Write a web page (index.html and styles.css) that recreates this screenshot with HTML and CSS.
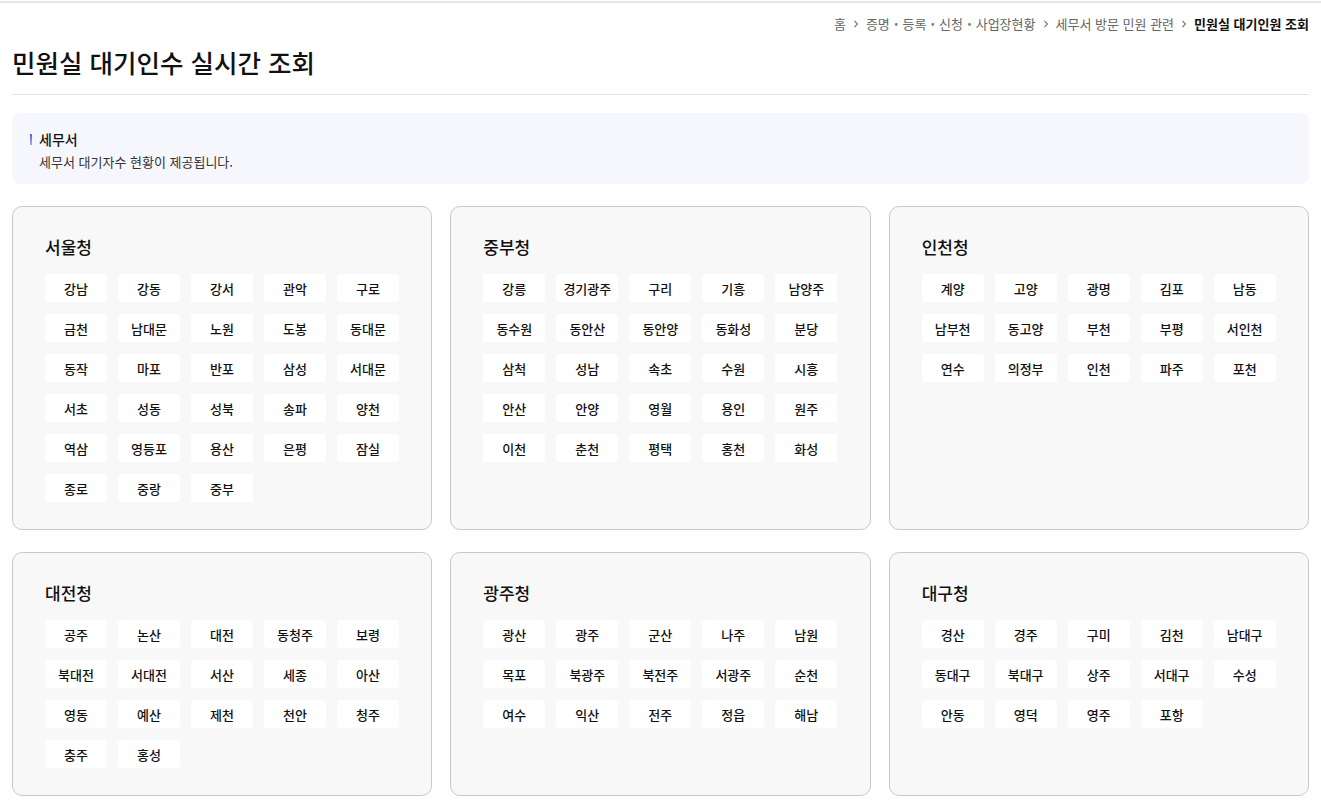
FILE: index.html
```html
<!DOCTYPE html>
<html lang="ko">
<head>
    <meta charset="UTF-8">
    <title>민원실 대기인수 실시간 조회</title>
    <link rel="stylesheet" href="styles.css">
</head>
<body>
    <div class="topline"></div>
    <div class="page">
        <div class="breadcrumb">
            <span>홈</span>
            <svg class="chev" width="6" height="8" viewBox="0 0 6 8"><path d="M1.5 1 L4.5 4 L1.5 7" fill="none" stroke="#777" stroke-width="1.1"/></svg>
            <span>증명 <b class="dot">•</b> 등록 <b class="dot">•</b> 신청 <b class="dot">•</b> 사업장현황</span>
            <svg class="chev" width="6" height="8" viewBox="0 0 6 8"><path d="M1.5 1 L4.5 4 L1.5 7" fill="none" stroke="#777" stroke-width="1.1"/></svg>
            <span>세무서 방문 민원 관련</span>
            <svg class="chev" width="6" height="8" viewBox="0 0 6 8"><path d="M1.5 1 L4.5 4 L1.5 7" fill="none" stroke="#777" stroke-width="1.1"/></svg>
            <span class="current">민원실 대기인원 조회</span>
        </div>

        <h1 class="page-title">민원실 대기인수 실시간 조회</h1>

        <div class="info-box">
            <div class="info-title"><span class="marker"></span>세무서</div>
            <div class="info-text">세무서 대기자수 현황이 제공됩니다.</div>
        </div>

        <div class="regions" id="regions"></div>
    </div>

    <script>
        const regions = [
            { name: '서울청', offices: ['강남','강동','강서','관악','구로','금천','남대문','노원','도봉','동대문','동작','마포','반포','삼성','서대문','서초','성동','성북','송파','양천','역삼','영등포','용산','은평','잠실','종로','중랑','중부'] },
            { name: '중부청', offices: ['강릉','경기광주','구리','기흥','남양주','동수원','동안산','동안양','동화성','분당','삼척','성남','속초','수원','시흥','안산','안양','영월','용인','원주','이천','춘천','평택','홍천','화성'] },
            { name: '인천청', offices: ['계양','고양','광명','김포','남동','남부천','동고양','부천','부평','서인천','연수','의정부','인천','파주','포천'] },
            { name: '대전청', offices: ['공주','논산','대전','동청주','보령','북대전','서대전','서산','세종','아산','영동','예산','제천','천안','청주','충주','홍성'] },
            { name: '광주청', offices: ['광산','광주','군산','나주','남원','목포','북광주','북전주','서광주','순천','여수','익산','전주','정읍','해남'] },
            { name: '대구청', offices: ['경산','경주','구미','김천','남대구','동대구','북대구','상주','서대구','수성','안동','영덕','영주','포항'] }
        ];

        const container = document.getElementById('regions');
        regions.forEach(region => {
            const card = document.createElement('div');
            card.className = 'region-card';
            card.innerHTML = `
                <h3 class="region-name">${region.name}</h3>
                <div class="office-list">
                    ${region.offices.map(o => `<button class="office-btn">${o}</button>`).join('')}
                </div>
            `;
            container.appendChild(card);
        });
    </script>
</body>
</html>
```

FILE: styles.css
```css
body {
    margin: 0;
    padding: 0;
    font-family: "Noto Sans CJK KR", "Noto Sans", sans-serif;
    color: #111;
    background: #fff;
}
.topline {
    height: 1px;
    border-bottom: 2px solid #e6e6e6;
}
.page {
    padding: 0 12px;
}
.breadcrumb {
    display: flex;
    justify-content: flex-end;
    align-items: center;
    gap: 7px;
    height: 21px;
    padding-top: 10px;
    padding-bottom: 2px;
    font-size: 13px;
    color: #666;
}
.breadcrumb .dot {
    font-size: 9px;
    vertical-align: 2px;
    color: #777;
    margin: 0 1px;
}
.breadcrumb .current {
    color: #111;
    font-weight: 700;
}
.chev {
    margin-top: 1px;
}
.page-title {
    margin: 0;
    padding: 7px 0 13px;
    font-size: 25.5px;
    font-weight: 500;
    line-height: 38px;
    border-bottom: 1px solid #e3e3e6;
}
.info-box {
    margin-top: 18px;
    background: #f6f7fc;
    border-radius: 8px;
    padding: 16px 16px 14px;
    height: 41px;
}
.info-title {
    display: flex;
    align-items: center;
    font-size: 14px;
    font-weight: 500;
    line-height: 20px;
}
.marker {
    width: 2px;
    height: 11px;
    background: linear-gradient(#5a5fd6, #a9b0ea);
    margin-right: 7px;
    margin-left: 2px;
}
.info-text {
    margin-top: 2px;
    font-size: 13px;
    color: #333;
    line-height: 22px;
    padding-left: 11px;
}
.regions {
    margin-top: 22px;
    display: grid;
    grid-template-columns: repeat(3, minmax(0, 1fr));
    column-gap: 18px;
    row-gap: 22px;
}
.region-card {
    background: #f8f8f8;
    border: 1px solid #c9c9c9;
    border-radius: 10px;
    padding: 23px 32px 27px;
}
.region-name {
    margin: 0 0 10px;
    font-size: 17px;
    font-weight: 500;
    line-height: 34px;
}
.office-list {
    display: grid;
    grid-template-columns: repeat(5, 62px);
    column-gap: 11px;
    row-gap: 12px;
}
.office-btn {
    height: 28px;
    background: #fff;
    border: none;
    border-radius: 4px;
    font-family: inherit;
    font-size: 13px;
    font-weight: 500;
    color: #111;
    padding: 0;
    cursor: pointer;
}
```
